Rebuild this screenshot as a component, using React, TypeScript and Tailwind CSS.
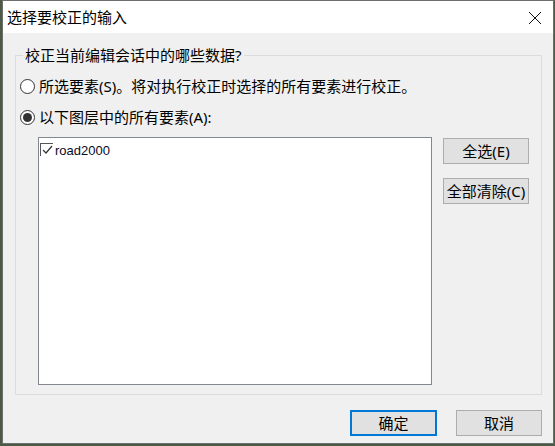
import React from 'react';

const font = { fontFamily: '"Noto Sans", "Noto Sans CJK SC", sans-serif' };

const Radio = ({ checked, label }: { checked?: boolean; label: string }) => (
  <label className="flex items-center h-[20px] pl-[4px] gap-[4px] text-[15px] leading-[20px] text-black">
    <span className="w-[15px] h-[15px] rounded-full border border-[#333333] bg-white flex items-center justify-center shrink-0">
      {checked && <span className="w-[9px] h-[9px] rounded-full bg-[#333333]" />}
    </span>
    <span>{label}</span>
  </label>
);

const WinButton = ({ children, primary, className = '' }: { children: React.ReactNode; primary?: boolean; className?: string }) => (
  <button
    className={
      'h-[26px] bg-[#e1e1e1] text-[15px] leading-[20px] text-black flex items-center justify-center ' +
      (primary ? 'border-2 border-[#0078d7] ' : 'border border-[#adadad] ') +
      className
    }
  >
    {children}
  </button>
);

const App = () => {
  return (
    <div className="w-[555px] h-[446px] bg-[#4b5a45] flex pl-[2px] overflow-hidden" style={font}>
      <div className="w-[552px] h-[444px] border border-[#6e6e6e] flex flex-col bg-[#f0f0f0]">
        {/* title bar */}
        <div className="h-[32px] bg-white flex items-center justify-between pl-[4px] pr-[11px] shrink-0">
          <span className="text-[15px] leading-[20px] text-black">选择要校正的输入</span>
          <svg width="14" height="14" viewBox="0 0 14 14" className="mt-[2px]">
            <path d="M1 1 L13 13 M13 1 L1 13" stroke="#111" strokeWidth="1" fill="none" />
          </svg>
        </div>

        {/* body */}
        <div className="flex-1 flex flex-col pl-[12px]">
          <fieldset className="mt-[12px] w-[527px] border border-[#dcdcdc] p-0 pb-[9px] m-0">
            <legend className="ml-[7px] px-[2px] text-[15px] leading-[20px] text-black">校正当前编辑会话中的哪些数据?</legend>
            <div className="flex flex-col gap-[11px] pt-[11px]">
              <Radio label="所选要素(S)。将对执行校正时选择的所有要素进行校正。" />
              <Radio checked label="以下图层中的所有要素(A):" />
            </div>
            <div className="flex mt-[10px] ml-[22px]">
              <div className="w-[394px] h-[248px] border border-[#828790] bg-white pl-[1px] pt-[2px]">
                <div className="flex items-center gap-[2px]">
                  <span className="w-[13px] h-[13px] border-l border-t border-[#555555] relative shrink-0">
                    <svg width="12" height="12" viewBox="0 0 12 12" className="absolute left-[0px] top-[0px]">
                      <path d="M2 6 L5 9 L11 2" stroke="#333" strokeWidth="1.2" fill="none" />
                    </svg>
                  </span>
                  <span className="text-[13px] leading-[16px] text-[#0a0a1e] mt-[3px]" style={{ fontFamily: '"Liberation Sans", Arial, sans-serif' }}>
                    road2000
                  </span>
                </div>
              </div>
              <div className="flex flex-col ml-[11px] pt-[1px] gap-[14px]">
                <WinButton className="w-[86px]">全选(E)</WinButton>
                <WinButton className="w-[86px]">全部清除(C)</WinButton>
              </div>
            </div>
          </fieldset>

          <div className="flex justify-end gap-[19px] w-[527px] mt-[15px]">
            <WinButton primary className="w-[87px]">确定</WinButton>
            <WinButton className="w-[86px]">取消</WinButton>
          </div>
        </div>
      </div>
    </div>
  );
};

export default App;
